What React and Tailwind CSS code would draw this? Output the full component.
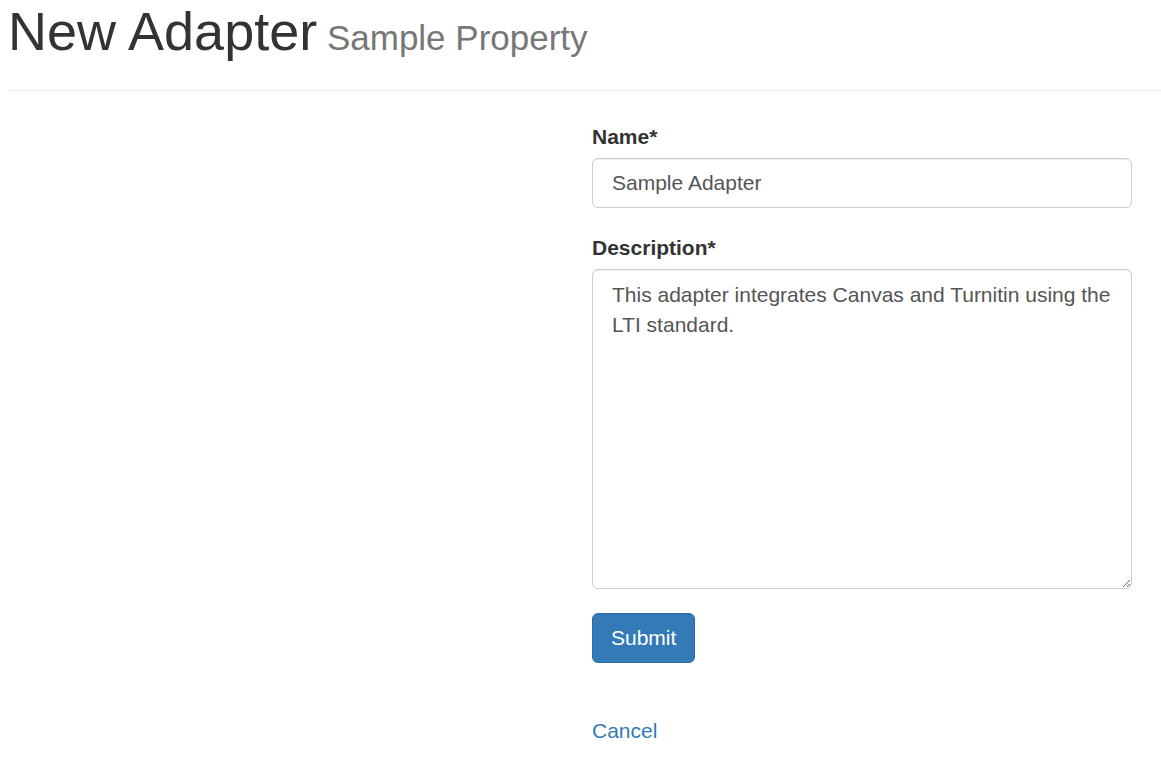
import React from 'react';

function App() {
  return (
    <div className="min-h-screen bg-white font-['Liberation_Sans',Arial,sans-serif] text-[#333]">
      {/* Page header */}
      <div className="ml-2 pt-[3px] pb-[24px] border-b border-[#eee]">
        <h1 className="text-[54px] leading-[57px] font-normal text-[#333]">
          New Adapter<small className="text-[35px] text-[#777]"> Sample Property</small>
        </h1>
      </div>

      <div className="grid grid-cols-[584px_540px] pl-2">
        <div />
        <form className="pt-[31px]" onSubmit={(e) => e.preventDefault()}>
          <div>
            <label className="block text-[21px] leading-[30px] font-bold mb-[6px]">Name*</label>
            <input
              type="text"
              defaultValue="Sample Adapter"
              className="block w-full h-[50px] px-[19px] text-[21px] text-[#555] border border-[#ccc] rounded-[6px] shadow-[inset_0_1px_1px_rgba(0,0,0,0.075)] outline-none"
            />
          </div>

          <div className="mt-[25px]">
            <label className="block text-[21px] leading-[30px] font-bold mb-[6px]">Description*</label>
            <textarea
              defaultValue="This adapter integrates Canvas and Turnitin using the LTI standard."
              className="block w-full h-[320px] px-[19px] pt-[10px] text-[21px] leading-[30px] text-[#555] border border-[#ccc] rounded-[6px] shadow-[inset_0_1px_1px_rgba(0,0,0,0.075)] outline-none"
            />
          </div>

          <button
            type="submit"
            className="mt-[24px] h-[50px] px-[18px] text-[21px] text-white bg-[#337ab7] border border-[#2e6da4] rounded-[6px]"
          >
            Submit
          </button>

          <div className="mt-[53px]">
            <a href="#" className="text-[21px] leading-[30px] text-[#337ab7]">
              Cancel
            </a>
          </div>
        </form>
      </div>
    </div>
  );
}

export default App;
